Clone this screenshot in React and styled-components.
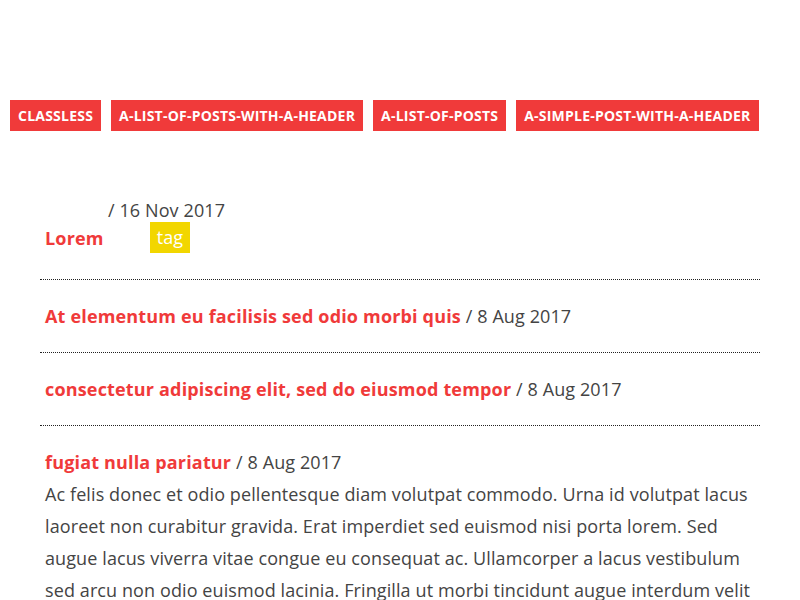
import styled, { createGlobalStyle } from 'styled-components'

const GlobalStyle = createGlobalStyle`
	html, body {
		margin: 0;
		padding: 0;
		background: #fff;
	}
	body {
		font-family: 'Open Sans', 'Liberation Sans', sans-serif;
		color: #444;
	}
`

const Page = styled.div`
	padding-top: 100px;
`

const TagBar = styled.nav`
	display: flex;
	gap: 10px;
	padding: 0 10px;
`

const TagLink = styled.a`
	display: block;
	background: #f03a3a;
	color: #fff;
	font-size: 14px;
	font-weight: 700;
	letter-spacing: 0.22px;
	line-height: 31px;
	padding: 0 8px;
	text-transform: uppercase;
	text-decoration: none;
	white-space: nowrap;
`

const PostList = styled.ul`
	list-style: none;
	margin: 48px 40px 0;
	padding: 0;
`

const Post = styled.li`
	padding: 20px 5px;
	border-bottom: 1px dotted #222;
	font-size: 18px;
	line-height: 32px;
	letter-spacing: 0.1px;
	&:last-child {
		border-bottom: none;
	}
`

const FirstPost = styled(Post)`
	padding-bottom: 26px;
`

const Title = styled.a`
	color: #f03a3a;
	font-weight: 700;
	letter-spacing: 0.17px;
	text-decoration: none;
`

const Date = styled.span`
	color: #444;
`

const DateLine = styled.div`
	line-height: 23px;
	padding-left: 63px;
`

const TitleLine = styled.div`
	display: flex;
	align-items: center;
	gap: 46px;
	height: 31px;
`

const Badge = styled.span`
	background: #f2d600;
	color: #fff;
	line-height: 31px;
	padding: 0 7px;
`

const Body = styled.p`
	margin: 0;
	color: #444;
`

const tags = [
	'classless',
	'a-list-of-posts-with-a-header',
	'a-list-of-posts',
	'a-simple-post-with-a-header'
]

const posts = [
	{ title: 'At elementum eu facilisis sed odio morbi quis', date: '8 Aug 2017' },
	{ title: 'consectetur adipiscing elit, sed do eiusmod tempor', date: '8 Aug 2017' }
]

export default function App() {
	return (
		<Page>
			<GlobalStyle />
			<TagBar>{tags.map((tag) => <TagLink key={tag} href="#">{tag}</TagLink>)}</TagBar>
			<PostList>
				<FirstPost>
					<DateLine>/ 16 Nov 2017</DateLine>
					<TitleLine>
						<Title href="#">Lorem</Title>
						<Badge>tag</Badge>
					</TitleLine>
				</FirstPost>
				{posts.map((post, i) => (
					<Post key={i}>
						<Title href="#">{post.title}</Title> <Date>/ {post.date}</Date>
					</Post>
				))}
				<Post>
					<Title href="#">fugiat nulla pariatur</Title> <Date>/ 8 Aug 2017</Date>
					<Body>
						Ac felis donec et odio pellentesque diam volutpat commodo. Urna id volutpat lacus
						laoreet non curabitur gravida. Erat imperdiet sed euismod nisi porta lorem. Sed
						augue lacus viverra vitae congue eu consequat ac. Ullamcorper a lacus vestibulum
						sed arcu non odio euismod lacinia. Fringilla ut morbi tincidunt augue interdum velit
						euismod in pellentesque.
					</Body>
				</Post>
			</PostList>
		</Page>
	)
}
